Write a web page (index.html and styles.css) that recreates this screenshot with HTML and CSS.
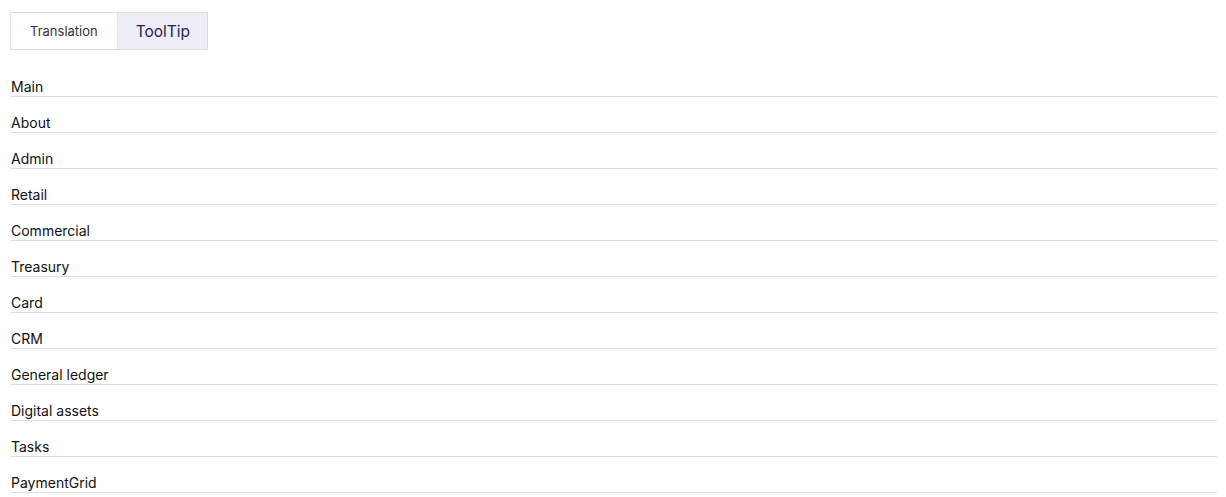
FILE: index.html
```html
<!DOCTYPE html>
<html lang="en">
<head>
    <meta charset="UTF-8">
    <meta name="viewport" content="width=device-width, initial-scale=1.0">
    <title>Menu</title>
    <link rel="stylesheet" href="styles.css">
</head>
<body>

    <div class="tabs">
        <button class="tab">Translation</button>
        <button class="tab active">ToolTip</button>
    </div>

    <ul class="menu-list">
        <li>Main</li>
        <li>About</li>
        <li>Admin</li>
        <li>Retail</li>
        <li>Commercial</li>
        <li>Treasury</li>
        <li>Card</li>
        <li>CRM</li>
        <li>General ledger</li>
        <li>Digital assets</li>
        <li>Tasks</li>
        <li>PaymentGrid</li>
    </ul>

</body>
</html>
```

FILE: styles.css
```css
/* Общие стили */
body {
    font-family: Inter, "Noto Sans", sans-serif;
    margin: 0;
    padding: 12px 9px 0 10px;
    background: white;
    color: #111;
}

/* Вкладки */
.tabs {
    display: inline-flex;
    border: 1px solid #dcdcdc;
}

.tab {
    font-family: inherit;
    height: 36px;
    border: none;
    background: white;
    padding: 0 19px;
    font-size: 13px;
    color: #333;
    cursor: pointer;
}

.tab + .tab {
    border-left: 1px solid #e6e6ee;
}

.tab.active {
    background-color: #ededf6;
    color: #2a2250;
    font-size: 15.5px;
    padding: 0 17px 0 18px;
}

/* Список */
.menu-list {
    list-style: none;
    margin: 11px 0 0 1px;
    padding: 0;
}

.menu-list li {
    padding-top: 17px;
    font-size: 14px;
    line-height: 18px;
    border-bottom: 1px solid #dedede;
}
```
